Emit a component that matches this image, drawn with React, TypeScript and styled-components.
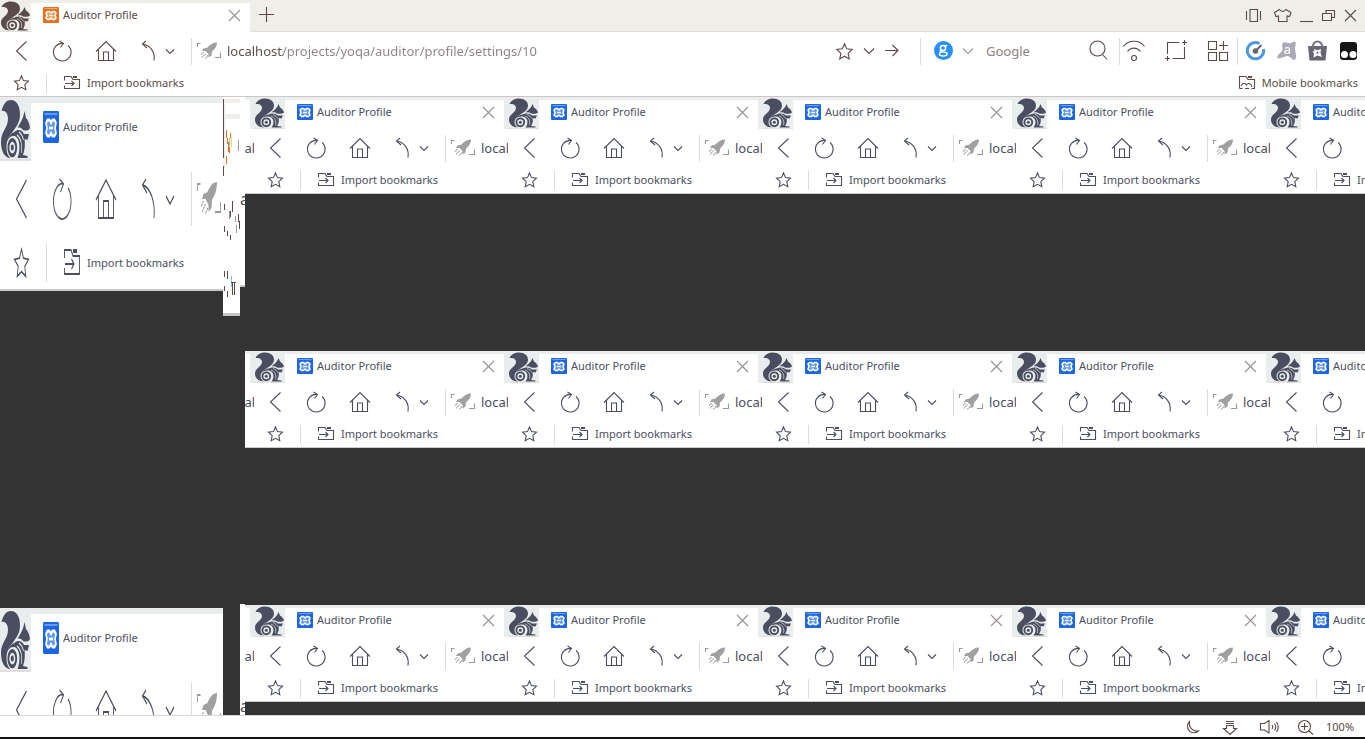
import React from "react";
import styled, { createGlobalStyle } from "styled-components";

const INK = "#5a4a48";
const COOL = "#4a4e60";

const Global = createGlobalStyle`
  *, *::before, *::after { box-sizing: border-box; }
  html, body, #root { height: 100%; margin: 0; }
  body { background: #333; font-family: "Noto Sans", "Open Sans", sans-serif; font-size: 11px; overflow: hidden; }
  button, input { font: inherit; color: inherit; border: 0; padding: 0; margin: 0; background: none; }
  svg { display: block; flex: none; }
`;

type Scaled = { $k: number };

const Window = styled.div`
  display: flex;
  flex-direction: column;
  height: 100vh;
  color: ${INK};
`;
const Header = styled.header`
  flex: none;
  background: #fff;
  border-bottom: 1px solid #cdc8c4;
`;
const TitleRow = styled.div<Scaled & { $tint: string }>`
  display: flex;
  height: ${(p) => 32 * p.$k}px;
  background: ${(p) => p.$tint};
`;
const ToolRow = styled.div<Scaled>`
  display: flex;
  align-items: center;
  height: ${(p) => 38 * p.$k}px;
`;
const MarkRow = styled.div<Scaled>`
  display: flex;
  align-items: center;
  height: ${(p) => 26 * p.$k}px;
`;
const Tab = styled.div<Scaled>`
  display: flex;
  align-items: center;
  flex: none;
  width: 219px;
  margin-top: ${(p) => 3 * p.$k}px;
  padding: 0 9px 0 12px;
  padding-bottom: ${(p) => 5 * p.$k}px;
  background: #fff;
`;
const TabTitle = styled.button`
  display: flex;
  align-items: center;
  gap: 4px;
  flex: 1;
  font-size: 11px;
  line-height: 16px;
  white-space: nowrap;
`;
const IconButton = styled.button`
  display: block;
  flex: none;
`;
const Rule = styled.span<Scaled>`
  flex: none;
  width: 1px;
  height: ${(p) => 27 * p.$k}px;
  background: #dedcda;
`;
const MarkRule = styled(Rule)`
  height: ${(p) => 19 * p.$k}px;
`;
const Mark = styled.button`
  display: flex;
  align-items: center;
  gap: 6px;
  flex: none;
  font-size: 11px;
  line-height: 16px;
  white-space: nowrap;
`;
const MobileMark = styled(Mark)`
  margin-left: auto;
  padding-right: 7px;
`;
const WindowControls = styled.div`
  display: flex;
  margin-left: auto;
`;
const Address = styled.input`
  flex: 1;
  min-width: 0;
  height: 24px;
  font-size: 13px;
  outline: 0;
  background: linear-gradient(90deg, ${INK} 56px, #8a8482 56px);
  -webkit-background-clip: text;
  background-clip: text;
  -webkit-text-fill-color: transparent;
`;
const Search = styled.input`
  width: 102px;
  height: 24px;
  font-size: 13px;
  outline: 0;
  &::placeholder { color: #8a8482; opacity: 1; }
`;

/* Every glyph is drawn in window coordinates; x, y, w, h select its cell. */
type GlyphProps = { x: number; y: number; w: number; h: number; k?: number; children: React.ReactNode };
const Glyph = ({ x, y, w, h, k = 1, children }: GlyphProps) => (
  <svg width={w} height={h * k} viewBox={`${x} ${y} ${w} ${h}`} preserveAspectRatio="none" fill="none" stroke="currentColor" strokeWidth={k > 1 ? 0.9 : 1.1}>
    {children}
  </svg>
);

const Squirrel = ({ k = 1, tint }: { k?: number; tint: string }) => (
  <Glyph x={0} y={0} w={31} h={31} k={k}>
    <g fill="currentColor" stroke="none">
      <path d="M1.500 7C3.500 3 7 1.500 11 1.500C16.500 1.500 20 4.500 20 8.500C20 13 16 15 12.500 17.500C8.500 20 6.500 22 6.500 25C6.500 28 8 29.500 10.500 30.500C4.500 30.500 1 27 1 22.500C1 17 8 15.500 8 11C8 8 5 6.500 1.500 7Z" />
      <path d="M24.500 7L26 10.500C28 11.500 29.500 13.500 30 15.500C28.500 17 25.500 17 23 16.500C21.500 15.500 20 15 17.500 15.500C20 13 23 11.500 24.500 7Z" />
      <path d="M14.500 17.500C18 15.800 22 16.500 24 18.500L29 18.500L27.500 21.500L24.500 21C25.500 25 24 27.500 23 29L27.500 29.500V30.500L17.500 30.500C20.500 27 20.500 20.500 14.500 19.500C11.500 19.200 9.500 20 7.500 21.500C9.500 19 12 17.800 14.500 17.500Z" />
    </g>
    <circle cx="12.300" cy="25.300" r="3.900" strokeWidth="1.900" />
    <circle cx="12.300" cy="25.300" r="1.500" fill="currentColor" stroke="none" />
    <path d="M17 19c4 1.500 5.500 5 4.500 9M19 17.500c2.500 1 4 2.500 4.500 4" stroke={tint} strokeWidth=".7" />
  </Glyph>
);

const Favicon = ({ k, warm }: { k: number; warm?: boolean }) => {
  const base = warm ? "#ea6f1c" : "#1c66e4";
  return (
    <Glyph x={0} y={0} w={16} h={16} k={k}>
      <rect width="16" height="16" rx="1" fill={base} stroke="none" />
      <path d="M1.500 1.500h13" stroke={warm ? "#f2a56d" : "#6ea2f2"} />
      <path d="M4.500 4.500H6.500L8 6l1.500-1.500h2L13 6l-1 2.500 1 2.500-1.500 1.500h-2L8 11l-1.500 1.500h-2L3 11l1-2.500L3 6Z" fill={warm ? "#f39a5c" : "#5f97f5"} stroke="#fff" strokeWidth="1.600" strokeLinejoin="round" />
      <path d="M6 8.500h4" stroke="#fff" strokeWidth="1.400" />
    </Glyph>
  );
};

const STAR = "M0-7l2 4.600 5 .6-3.700 3.500 1 5L0 4.300-4.300 6.700l1-5L-7-1.800l5-.6Z";

const BrandBox = styled.div<Scaled & { $tint: string }>`
  flex: none;
  width: 31px;
  height: ${(p) => 32 * p.$k}px;
  background: ${(p) => p.$tint};
  border-bottom: ${(p) => p.$k}px solid #dfe0de;
`;

const Titles = ({ k, warm }: { k: number; warm?: boolean }) => {
  const tint = warm ? "#efeee9" : "#e9eded";
  return (
    <>
      <BrandBox $k={k} $tint={tint}><Squirrel k={k} tint={tint} /></BrandBox>
      <Tab $k={k}>
        <TabTitle><Favicon k={k} warm={warm} />Auditor Profile</TabTitle>
        <IconButton aria-label="Close tab">
          <Glyph x={227} y={8} w={14} h={14} k={k}><path d="M229 10l11 11M240 10l-11 11" stroke="#96918f" /></Glyph>
        </IconButton>
      </Tab>
    </>
  );
};

const NavGlyphs = ({ k }: { k: number }) => (
  <>
    <IconButton aria-label="Back"><Glyph x={0} y={32} w={42} h={38} k={k}><path d="M26.500 41.500L16.500 51l10 9.500" /></Glyph></IconButton>
    <IconButton aria-label="Reload"><Glyph x={42} y={32} w={40} h={38} k={k}><path d="M68 45.500A8.800 8.800 0 1 1 63 43.400M59.500 41l4 2.500-3 4" /></Glyph></IconButton>
    <IconButton aria-label="Home"><Glyph x={82} y={32} w={48} h={38} k={k}><path d="M96 51.500l10-10 10 10M98.500 49.500v11h15v-11M103.500 60.500v-8.500h5v8.500" /></Glyph></IconButton>
    <IconButton aria-label="Undo"><Glyph x={130} y={32} w={30} h={38} k={k}><path d="M146 41l-3.500 3 4.500 4M142.500 44C150 45 155.500 52 154 60.500" /></Glyph></IconButton>
    <IconButton aria-label="History"><Glyph x={160} y={32} w={31} h={38} k={k}><path d="M166 49.500l4 4 4-4" /></Glyph></IconButton>
    <Rule $k={k} />
    <Glyph x={192} y={32} w={35} h={38} k={k}>
      <g stroke="#999">
        <path d="M197.500 47v-3.500h3M215 57.500h5.500v-5" />
        <path d="M217 42.500c-4 0-7 2-9.500 5l-4 1-1.500 2.500h3.500l3 3v3.500l3-2 .5-4c3-2.500 5-5 5-9Z" fill="#a0a0a0" stroke="none" />
        <path d="M205.500 53.500l-3.500 4M203.500 52l-2.500 3M208 55.500l-3 3" strokeDasharray="1.400 .5" />
      </g>
    </Glyph>
  </>
);

const MarkGlyphs = ({ k }: { k: number }) => (
  <>
    <IconButton aria-label="Favourites">
      <Glyph x={0} y={70} w={46} h={26} k={k}><path d={STAR} transform="translate(21.5 83)" /></Glyph>
    </IconButton>
    <MarkRule $k={k} />
    <Mark>
      <Glyph x={47} y={70} w={34} h={26} k={k}>
        <path d="M64.500 80.500v-4h6.500l2 3h6.500v9h-15v-3M65 83.500h9M71.500 81l2.500 2.500-2.500 2.500" /><path d="M73 77h4" strokeWidth="2" />
      </Glyph>
      Import bookmarks
    </Mark>
  </>
);

const TileBox = styled.div<Scaled & { $width: number }>`
  flex: none;
  width: ${(p) => p.$width}px;
  overflow: hidden;
  background: #fff;
  color: ${COOL};
  border-bottom: ${(p) => p.$k}px solid #c9c9cf;
`;
const TileText = styled.span`
  flex: none;
  font-size: 13px;
  line-height: 18px;
  white-space: nowrap;
`;
const Tile = ({ k = 1, width = 254 }: { k?: number; width?: number }) => (
  <TileBox $k={k} $width={width}>
    <TitleRow $k={k} $tint="#e9eded"><Titles k={k} /></TitleRow>
    <ToolRow $k={k}><NavGlyphs k={k} />{k === 1 && <TileText>local</TileText>}</ToolRow>
    <MarkRow $k={k}><MarkGlyphs k={k} /></MarkRow>
  </TileBox>
);

const Page = styled.main`
  display: grid;
  grid-template-columns: 223px 17px 5px minmax(0, 1fr);
  flex: 1;
  min-height: 0;
  overflow: hidden;
  background: #333;
`;
const Column = styled.div<{ $gap: number }>`
  display: flex;
  flex-direction: column;
  gap: ${(p) => p.$gap}px;
  min-width: 0;
  overflow: hidden;
`;
const Strip = styled.section`
  flex: none;
  overflow: hidden;
`;
const StripTrack = styled.div`
  display: flex;
  margin-left: -245px;
`;
const Sliver = styled.div`
  flex: none;
  height: 190px;
  padding-top: 92px;
  overflow: hidden;
  background: #fff;
  border-bottom: 2px solid #c9c9cf;
  color: ${COOL};
  font-size: 16px;
  line-height: 20px;
`;

const StatusBar = styled.footer`
  display: flex;
  align-items: center;
  justify-content: flex-end;
  flex: none;
  height: 24px;
  background: #fff;
  border-top: 1px solid #d8d8d8;
  border-bottom: 2px solid #111;
`;
const Zoom = styled.span`
  width: 45px;
  padding-left: 6px;
  font-size: 11px;
  line-height: 16px;
`;

const Debris = () => (
  <svg width="17" height="219" viewBox="0 0 17 219">
    <path fill="#fff" d="M0 0h17v219H0z" />
    <path fill="#efeee9" d="M0 2h17v4H0zM0 17h17v5H0zM0 6h2v66H0z" />
    <path fill="#c9c7c5" d="M0 216h17v3H0z" />
    <path fill="none" stroke={INK} d="M.5 2v59M.5 69v10" />
    <path fill="none" stroke="#e5701d" d="M3.500 33v8M4.500 41v6M5.500 45v10M6.500 50v6M7.500 36v5M3.500 59v8" />
    <path fill="none" stroke="#ffd84a" d="M8.500 40v10" />
    <path fill="none" stroke="#7cc4f0" d="M6.500 41v8M8.500 179v11" />
    <path fill="none" stroke="#999" d="M15.500 43v11M6.500 114v8M12.500 119v6M13.500 128v8" />
    <path fill="none" stroke={INK} d="M1.500 107v6M9.500 104v11M7.500 114v6M1.500 129v6M4.500 134v5M7.500 138v5M15.500 117v8M16.500 124v8M1.500 174v6M4.500 174v8M1.500 189v5M4.500 194v6M8 185.500h5M9.500 186v12M11.500 186v12" />
  </svg>
);

export default function App() {
  return (
    <Window>
      <Global />
      <Header>
        <TitleRow $k={1} $tint="linear-gradient(#efeee9 31px, #dfdeda 31px)">
          <Titles k={1} warm />
          <IconButton aria-label="New tab">
            <Glyph x={250} y={0} w={34} h={32}><path d="M259 14.500h15M266.500 7v15" /></Glyph>
          </IconButton>
          <WindowControls>
            <IconButton aria-label="Side panel"><Glyph x={1240} y={0} w={29} h={32}><path d="M1246.500 11v9M1260.500 11v9M1250 9.500h7.500v12h-7.500z" /></Glyph></IconButton>
            <IconButton aria-label="Themes"><Glyph x={1269} y={0} w={28} h={32}><path d="M1279.500 9.500l-5 3 1.500 4 2.500-.5v5.500h8.500v-5.500l2.500.5 1.500-4-5-3c-1.500 2.500-5 2.500-6.500 0Z" /></Glyph></IconButton>
            <IconButton aria-label="Minimise"><Glyph x={1297} y={0} w={20} h={32}><path d="M1300 21.500h13" /></Glyph></IconButton>
            <IconButton aria-label="Restore"><Glyph x={1317} y={0} w={24} h={32}><path d="M1322.500 13.500h9v7h-9zM1326 13v-2.500h8.500v7H1332" /></Glyph></IconButton>
            <IconButton aria-label="Close window"><Glyph x={1341} y={0} w={24} h={32}><path d="M1345 10l11 11M1356 10l-11 11" /></Glyph></IconButton>
          </WindowControls>
        </TitleRow>
        <ToolRow $k={1}>
          <NavGlyphs k={1} />
          <Address aria-label="Address" defaultValue="localhost/projects/yoqa/auditor/profile/settings/10" />
          <IconButton aria-label="Bookmark page"><Glyph x={830} y={32} w={30} h={38}><path d={STAR} transform="translate(844.5 51.5) scale(1.1)" strokeWidth="1" /></Glyph></IconButton>
          <IconButton aria-label="Bookmark options"><Glyph x={860} y={32} w={20} h={38}><path d="M864 48.500l5 5 5-5" /></Glyph></IconButton>
          <IconButton aria-label="Go"><Glyph x={880} y={32} w={40} h={38}><path d="M885 50.500h13M892.500 45l5.500 5.500-5.500 5.500" /></Glyph></IconButton>
          <Rule $k={1} />
          <Glyph x={921} y={32} w={35} h={38}>
            <circle cx="943.500" cy="50.500" r="9.500" fill="#2690fa" stroke="none" />
            <g stroke="#fff" strokeWidth="1.500"><ellipse cx="943" cy="48" rx="2.600" ry="2.500" /><path d="M945 46l2.200-.8M941 50c-1.500 1.500-.5 2 2 2 3 0 4 .5 4 2s-2 2-4 2-3.500-.8-3.500-2 1-1.800 2-2" /></g>
          </Glyph>
          <IconButton aria-label="Search engine"><Glyph x={956} y={32} w={30} h={38}><path d="M963 48.500l5 5 5-5" stroke="#999" /></Glyph></IconButton>
          <Search aria-label="Search" placeholder="Google" />
          <IconButton aria-label="Search the web"><Glyph x={1088} y={32} w={31} h={38}><circle cx="1097.500" cy="48.500" r="7.500" /><path d="M1102.500 54.500l4.500 5" /></Glyph></IconButton>
          <Rule $k={1} />
          <IconButton aria-label="Wi-Fi"><Glyph x={1120} y={32} w={37} h={38}><path d="M1123.500 46.500c5-7 16-7 21 0M1127.500 51.500c3.500-4.500 9.500-4.500 13 0" /><circle cx="1134" cy="58" r="2.500" /></Glyph></IconButton>
          <IconButton aria-label="Screenshot"><Glyph x={1157} y={32} w={40} h={38}><path d="M1167.500 54v-11.500h12M1184.500 47v11.500h-12M1184.500 40v5M1182 42.500h5M1167.500 56v5M1165 58.500h5" /></Glyph></IconButton>
          <IconButton aria-label="Extensions"><Glyph x={1197} y={32} w={40} h={38}><path d="M1208.500 41.500h8v8h-8zM1208.500 52.500h8v8h-8zM1219.500 52.500h8v8h-8zM1223.500 41v9M1219 45.500h9" /></Glyph></IconButton>
          <Rule $k={1} />
          <IconButton aria-label="Speed"><Glyph x={1238} y={32} w={34} h={38}><path d="M1259.500 43.500A8.200 8.200 0 1 0 1263.500 49" stroke="#4c9be0" strokeWidth="3" /><circle cx="1255.500" cy="51" r="2.800" fill="#666" stroke="none" /><path d="M1255.500 51l6-6" stroke="#666" strokeWidth="2" /></Glyph></IconButton>
          <IconButton aria-label="Avast"><Glyph x={1272} y={32} w={30} h={38}><path d="M1283.500 42.500c2-.8 4 1 6 .8 2.500-.3 4-2.300 5.500-1.800 1.500.8.500 4.500 0 6.500-.3 2 .8 4.500 1 7 .2 2.500-.3 5-1.500 5-2 .2-4.500-4-7-4-3 0-6 2.500-8.500 2.500-2 0-2.500-1.500-1-3.500 1.500-1.800 4-3 4.500-5 .3-2-1.500-6.500 1-7.500Z" fill="#aaaab8" stroke="none" /><path d="M1285 48.500c1-1.200 4.300-1.200 4.500.5v4.500M1289.500 50.500c-3-.5-5 .3-5 1.600 0 1.800 3.800 1.800 5 0" stroke="#fff" /></Glyph></IconButton>
          <IconButton aria-label="Shopping"><Glyph x={1302} y={32} w={32} h={38}><path d="M1308 46h19l-1.500 14.500h-16z" fill="#666676" stroke="none" /><path d="M1313 47.500c-1-8 10-8 9 0" stroke="#777786" strokeWidth="2" /><path d="M1314 49l3.500 1.200 3.500-1.200-.5 4 1.500 4-4.500-1.500-4 2 .5-4-1.500-2 2-.5z" fill="#fff" stroke="none" /><circle cx="1317.500" cy="52.800" r="1" fill="#666676" stroke="none" /></Glyph></IconButton>
          <IconButton aria-label="Reader"><Glyph x={1334} y={32} w={31} h={38}><rect x="1340" y="42" width="17" height="18" rx="3" fill="#161616" stroke="none" /><circle cx="1344.500" cy="54.500" r="3.500" fill="#fff" stroke="none" /><circle cx="1353" cy="54.500" r="3.500" fill="#fff" stroke="none" /></Glyph></IconButton>
        </ToolRow>
        <MarkRow $k={1}>
          <MarkGlyphs k={1} />
          <MobileMark>
            <Glyph x={1230} y={70} w={23} h={26}><path d="M1236.500 88.500v-12h6.500l2 3h6.500v9h-3M1236.500 88.500h3M1238 86c2-3.500 4-3.500 5.500-1 2-3 5-1 5.500 2M1242 88.500h4" /><path d="M1245 77h4" strokeWidth="2" /></Glyph>
            Mobile bookmarks
          </MobileMark>
        </MarkRow>
      </Header>
      <Page>
        <Column $gap={317}>
          <Tile k={2} width={223} />
          <Tile k={2} width={223} />
        </Column>
        <Column $gap={0}><Debris /></Column>
        <Column $gap={317}>
          <Sliver>a</Sliver>
          <Sliver>a</Sliver>
        </Column>
        <Column $gap={157}>
          {[0, 1, 2].map((row) => (
            <Strip key={row}>
              <StripTrack>
                {Array.from({ length: 9 }, (_, i) => <Tile key={i} />)}
              </StripTrack>
            </Strip>
          ))}
        </Column>
      </Page>
      <StatusBar>
        <IconButton aria-label="Night mode"><Glyph x={1174} y={716} w={36} h={21}><path d="M1189.500 721.500a6.500 6.500 0 1 0 9 9.500c-5.500 1-10-3.500-9-9.500Z" /></Glyph></IconButton>
        <IconButton aria-label="Downloads"><Glyph x={1210} y={716} w={40} h={21}><path d="M1226 721.500h8M1226 723.500h8M1226.500 725.500h7v3h3l-6.500 6-6.500-6h3z" /></Glyph></IconButton>
        <IconButton aria-label="Sound"><Glyph x={1250} y={716} w={38} h={21}><path d="M1260.500 723.500h4l4.500-3v12.500l-4.500-3h-4zM1272 725q1.500 2 0 4M1274.500 723.500q2.500 3.500 0 7M1276.500 722q3.500 5 0 10" /></Glyph></IconButton>
        <IconButton aria-label="Zoom in"><Glyph x={1288} y={716} w={32} h={21}><circle cx="1304.500" cy="726.500" r="6" /><path d="M1309 731l4 3.500M1301 726.500h7M1304.500 723v7" /></Glyph></IconButton>
        <Zoom>100%</Zoom>
      </StatusBar>
    </Window>
  );
}
